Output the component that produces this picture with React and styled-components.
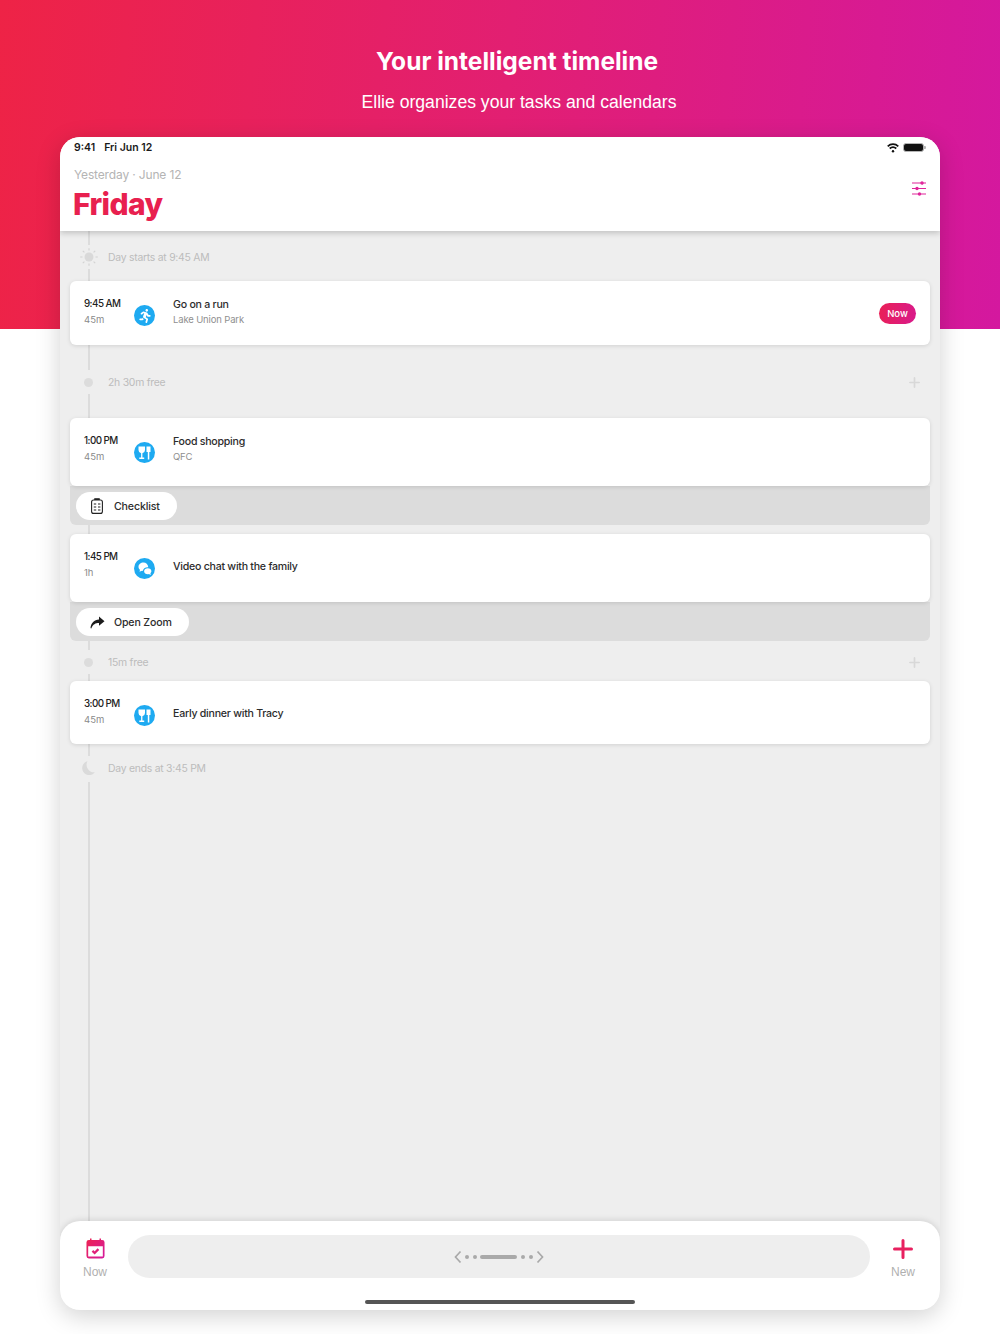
import React from "react";
import styled, { createGlobalStyle } from "styled-components";
import { FaRunning } from "react-icons/fa";

const GlobalStyle = createGlobalStyle`
  html, body {
    margin: 0;
    padding: 0;
    background: #fff;
    font-family: Inter, "Liberation Sans", sans-serif;
  }
  * {
    box-sizing: border-box;
  }
`;

function WifiIcon() {
  return (
    <svg width="12" height="10" viewBox="0 0 12 10" fill="none" stroke="#111" strokeWidth="1.7">
      <path d="M0.700 3.300c3-2.800 7.600-2.800 10.600 0" />
      <path d="M2.700 5.500c1.900-1.700 4.700-1.700 6.600 0" />
      <circle cx="6" cy="8.200" r="1.200" fill="#111" stroke="none" />
    </svg>
  );
}

function SlidersIcon() {
  return (
    <svg width="16" height="15" viewBox="0 0 16 15" fill="#e0249a" stroke="#e0249a" strokeWidth="1.200">
      <path d="M1 2h14M1 7.500h14M1 13h14" />
      <circle cx="11" cy="2" r="1.100" />
      <circle cx="6" cy="7.500" r="1.100" />
      <circle cx="8.500" cy="13" r="1.100" />
    </svg>
  );
}

function SunIcon() {
  return (
    <svg width="18" height="18" viewBox="0 0 18 18" stroke="#d2d2d2" strokeWidth="1.100">
      <circle cx="9" cy="9" r="4.500" fill="#d9d9d9" stroke="none" />
      <path d="M9 0.200v2.300M9 15.500v2.300M0.200 9h2.300M15.500 9h2.300M2.800 2.800l1.600 1.600M13.600 13.600l1.600 1.600M2.800 15.200l1.600-1.600M13.600 4.400l1.600-1.600" />
    </svg>
  );
}

function MoonIcon() {
  return (
    <svg width="13" height="14" viewBox="0 0 13 14">
      <path d="M5.500 0.300A7 7 0 1 0 12.800 11.300A7.500 7.500 0 0 1 5.500 0.300Z" fill="#dadada" />
    </svg>
  );
}

function FoodIcon() {
  return (
    <svg width="13" height="14" viewBox="0 0 13 14" fill="#fff">
      <path d="M0.500 0.500h6.500v3.500a3.250 3.250 0 0 1-2.600 3.200V11.500h1.800V13H1.300v-1.500h1.800V7.200A3.250 3.250 0 0 1 0.500 4Z" />
      <path d="M8.500 0.500h4v5.500h-1.200V13.500h-1.500V6H8.500Z" />
    </svg>
  );
}

function ChatIcon() {
  return (
    <svg width="14" height="13" viewBox="0 0 14 13" fill="#fff">
      <path d="M5.500 0.500C2.700 0.500 0.500 2.400 0.500 4.800c0 1.200.6 2.300 1.500 3L1.500 9.800l2.500-1c.3.100.6.100.900.200C5 6.800 7 5.200 9.700 5.200h.6C10 2.600 8 0.500 5.500 0.500Z" />
      <path d="M9.800 6.300c-2 0-3.700 1.300-3.700 3s1.700 3 3.700 3c.4 0 .8 0 1.100-.2l1.900.8-.4-1.600c.6-.5 1-1.200 1-2 0-1.700-1.600-3-3.600-3Z" />
    </svg>
  );
}

function ChecklistIcon() {
  return (
    <svg width="12" height="16" viewBox="0 0 12 16" fill="none" stroke="#222" strokeWidth="1.100">
      <rect x="0.600" y="2" width="10.800" height="13.400" rx="2" />
      <path d="M3.800 2V0.800h4.400V2" fill="#222" />
      <path d="M2.800 6h2.400M7 6h2.400M2.800 9h2.400M7 9h2.400M2.800 12h2.400M7 12h2.400" />
    </svg>
  );
}

function ShareIcon() {
  return (
    <svg width="15" height="13" viewBox="0 0 15 13" fill="#1c1c1c">
      <path d="M9 0.500L14.500 5.200 9 9.700V7C5.500 7 3 8.200 1.300 12.500 0.800 12.500 0.500 12.200 0.500 11.800 1 7 4.200 3.700 9 3.400Z" />
    </svg>
  );
}

function CalendarIcon() {
  return (
    <svg width="19" height="21" viewBox="0 0 20 22">
      <defs>
        <linearGradient id="calGrad" x1="0" y1="0" x2="1" y2="1">
          <stop offset="0" stopColor="#ee2350" />
          <stop offset="1" stopColor="#d4199e" />
        </linearGradient>
      </defs>
      <path
        d="M3 2h1.200V0.500h1.600V2h8.400V0.500h1.600V2H17a2.500 2.500 0 0 1 2.500 2.500V19A2.500 2.500 0 0 1 17 21.500H3A2.500 2.500 0 0 1 0.500 19V4.500A2.500 2.500 0 0 1 3 2ZM2.300 8.500V19.500h15.400V8.500Z"
        fill="url(#calGrad)"
        fillRule="evenodd"
      />
      <path d="M6.800 13.500l2.300 2.200 4-4" fill="none" stroke="#e01f78" strokeWidth="2.400" />
    </svg>
  );
}

function PlusIcon({ size, color, weight }) {
  return (
    <svg width={size} height={size} viewBox="0 0 20 20" stroke={color} strokeWidth={weight} strokeLinecap="round">
      <path d="M10 1.500v17M1.500 10h17" />
    </svg>
  );
}

function SwipeHandle() {
  return (
    <svg width="90" height="14" viewBox="0 0 90 14" fill="#a9a9a9">
      <path d="M6.500 1.500L1.500 7l5 5.500M83.500 1.500L88.500 7l-5 5.500" fill="none" stroke="#a9a9a9" strokeWidth="1.700" />
      <circle cx="13" cy="7" r="2" />
      <circle cx="21" cy="7" r="2" />
      <rect x="26" y="5" width="37" height="4" rx="2" />
      <circle cx="69" cy="7" r="2" />
      <circle cx="77" cy="7" r="2" />
    </svg>
  );
}

function EventCard({ time, duration, title, place, icon, now, height }) {
  return (
    <Card $height={height}>
      <TimeColumn>
        <TimeText>{time}</TimeText>
        <Duration>{duration}</Duration>
      </TimeColumn>
      <IconBadge>{icon}</IconBadge>
      <Details $single={!place}>
        <Title>{title}</Title>
        {place && <Place>{place}</Place>}
      </Details>
      {now && <NowBadge>Now</NowBadge>}
    </Card>
  );
}

function FreeSlot({ label }) {
  return (
    <MarkerRow>
      <MarkerSlot $inset={24}>
        <Dot />
      </MarkerSlot>
      <MarkerText>{label}</MarkerText>
      <AddSlot>
        <PlusIcon size={11} color="#d8d8d8" weight={3} />
      </AddSlot>
    </MarkerRow>
  );
}

function TrayAction({ icon, label }) {
  return (
    <Tray>
      <TrayButton>
        <TrayIcon>{icon}</TrayIcon>
        {label}
      </TrayButton>
    </Tray>
  );
}

function App() {
  return (
    <Page>
      <GlobalStyle />
      <Heading>Your intelligent timeline</Heading>
      <Subheading>Ellie organizes your tasks and calendars</Subheading>
      <Device>
        <Header>
          <StatusBar>
            <StatusLeft>
              <span>9:41</span>
              <span>Fri Jun 12</span>
            </StatusLeft>
            <StatusRight>
              <WifiIcon />
              <Battery />
            </StatusRight>
          </StatusBar>
          <HeaderBody>
            <div>
              <DateLine>Yesterday · June 12</DateLine>
              <DayTitle>Friday</DayTitle>
            </div>
            <FilterButton>
              <SlidersIcon />
            </FilterButton>
          </HeaderBody>
        </Header>
        <Timeline>
          <Connector $height={14} />
          <MarkerRow>
            <MarkerSlot $inset={20}>
              <SunIcon />
            </MarkerSlot>
            <MarkerText>Day starts at 9:45 AM</MarkerText>
          </MarkerRow>
          <Connector $height={12} />
          <EventCard
            time="9:45 AM"
            duration="45m"
            title="Go on a run"
            place="Lake Union Park"
            icon={<FaRunning size={14} color="#fff" />}
            height={64}
            now
          />
          <Connector $height={25} />
          <FreeSlot label="2h 30m free" />
          <Connector $height={24} />
          <CardGroup>
            <EventCard
              time="1:00 PM"
              duration="45m"
              title="Food shopping"
              place="QFC"
              icon={<FoodIcon />}
              height={68}
            />
            <TrayAction icon={<ChecklistIcon />} label="Checklist" />
          </CardGroup>
          <Connector $height={9} />
          <CardGroup>
            <EventCard
              time="1:45 PM"
              duration="1h"
              title="Video chat with the family"
              icon={<ChatIcon />}
              height={68}
            />
            <TrayAction icon={<ShareIcon />} label="Open Zoom" />
          </CardGroup>
          <Connector $height={9} />
          <FreeSlot label="15m free" />
          <Connector $height={7} />
          <EventCard
            time="3:00 PM"
            duration="45m"
            title="Early dinner with Tracy"
            icon={<FoodIcon />}
            height={63}
          />
          <Connector $height={12} />
          <MarkerRow>
            <MarkerSlot $inset={22}>
              <MoonIcon />
            </MarkerSlot>
            <MarkerText>Day ends at 3:45 PM</MarkerText>
          </MarkerRow>
          <Connector $grow />
        </Timeline>
        <BottomBar>
          <NavRow>
            <NavItem $inset={2}>
              <NavIcon>
                <CalendarIcon />
              </NavIcon>
              <NavLabel>Now</NavLabel>
            </NavItem>
            <SearchPill>
              <SwipeHandle />
            </SearchPill>
            <NavItem>
              <NavIcon>
                <PlusIcon size={20} color="#e8205f" weight={3} />
              </NavIcon>
              <NavLabel>New</NavLabel>
            </NavItem>
          </NavRow>
          <HomeIndicator />
        </BottomBar>
      </Device>
    </Page>
  );
}

export default App;

const Page = styled.div`
  width: 1000px;
  height: 1334px;
  overflow: hidden;
  padding-top: 46px;
  background: linear-gradient(95deg, #ee2346 0%, #e21f72 50%, #d4189f 100%) no-repeat;
  background-size: 100% 329px;
  display: flex;
  flex-direction: column;
  align-items: center;
`;

const Heading = styled.h1`
  margin: 0 0 0 34px;
  width: 966px;
  text-align: center;
  font-family: Inter, sans-serif;
  font-size: 24.500px;
  line-height: 30px;
  font-weight: 700;
  color: #fff;
`;

const Subheading = styled.p`
  margin: 15px 0 0 38px;
  width: 962px;
  text-align: center;
  font-family: "Liberation Sans", Arial, sans-serif;
  font-size: 17.600px;
  line-height: 22px;
  color: #fff;
`;

const Device = styled.div`
  width: 880px;
  height: 1173px;
  margin-top: 24px;
  border-radius: 20px;
  overflow: hidden;
  background: #eeeeee;
  box-shadow: 0 6px 24px rgba(0, 0, 0, 0.18);
  display: flex;
  flex-direction: column;
`;

const Header = styled.header`
  height: 94px;
  flex: none;
  background: #fff;
  box-shadow: 0 2px 6px rgba(0, 0, 0, 0.2);
  position: relative;
  z-index: 1;
`;

const StatusBar = styled.div`
  height: 20px;
  padding: 1px 16px 0 14px;
  display: flex;
  align-items: center;
  justify-content: space-between;
`;

const StatusLeft = styled.div`
  display: flex;
  gap: 9px;
  font-size: 10.500px;
  font-weight: 600;
  color: #1a1a1a;
`;

const StatusRight = styled.div`
  display: flex;
  align-items: center;
  gap: 4px;
`;

const Battery = styled.div`
  width: 21px;
  height: 9px;
  border-radius: 3px;
  background: #111;
  border: 1px solid #b5b5b5;
  position: relative;

  &::after {
    content: "";
    position: absolute;
    right: -3px;
    top: 2px;
    width: 2px;
    height: 3px;
    border-radius: 0 1px 1px 0;
    background: #b5b5b5;
  }
`;

const HeaderBody = styled.div`
  padding: 10px 13px 0 13px;
  display: flex;
  align-items: flex-start;
  justify-content: space-between;
`;

const FilterButton = styled.div`
  margin-top: 14px;
  display: flex;
`;

const DateLine = styled.div`
  padding-left: 1px;
  font-size: 12px;
  line-height: 16px;
  letter-spacing: -0.15px;
  color: #b4b4b4;
`;

const DayTitle = styled.div`
  margin-top: 3px;
  font-size: 30px;
  line-height: 36px;
  font-weight: 800;
  letter-spacing: -0.6px;
  color: #e8204f;
`;

const Timeline = styled.main`
  flex: 1;
  min-height: 0;
  display: flex;
  flex-direction: column;
`;

const Connector = styled.div`
  width: 2px;
  margin-left: 28px;
  margin-top: ${(p) => (p.$grow ? "2px" : "0")};
  flex: ${(p) => (p.$grow ? "1" : "none")};
  height: ${(p) => (p.$height ? `${p.$height}px` : "auto")};
  background: #dcdcdc;
`;

const MarkerRow = styled.div`
  height: 24px;
  flex: none;
  display: flex;
  align-items: center;
  padding-right: 20px;
`;

const MarkerSlot = styled.div`
  width: 48px;
  padding-left: ${(p) => p.$inset}px;
  display: flex;
  align-items: center;
`;

const MarkerText = styled.span`
  font-size: 10.400px;
  letter-spacing: -0.25px;
  color: #bcbcbc;
`;

const AddSlot = styled.div`
  margin-left: auto;
  display: flex;
`;

const Dot = styled.div`
  width: 9px;
  height: 9px;
  border-radius: 50%;
  background: #dcdcdc;
`;

const CardGroup = styled.div`
  flex: none;
`;

const Card = styled.div`
  height: ${(p) => p.$height}px;
  margin: 0 10px;
  padding: 16px 14px 0;
  background: #fff;
  border-radius: 6px;
  box-shadow: 0 1px 4px rgba(0, 0, 0, 0.12);
  display: flex;
  align-items: flex-start;
  position: relative;
`;

const TimeColumn = styled.div`
  width: 50px;
`;

const TimeText = styled.div`
  font-size: 9.800px;
  line-height: 14px;
  font-weight: 500;
  letter-spacing: -0.55px;
  color: #222;
`;

const Duration = styled.div`
  margin-top: 2px;
  font-size: 9.500px;
  line-height: 14px;
  color: #8a8a8a;
`;

const IconBadge = styled.div`
  width: 21px;
  height: 21px;
  margin-top: 8px;
  border-radius: 50%;
  background: #1eaaf1;
  display: flex;
  align-items: center;
  justify-content: center;
  flex: none;
`;

const Details = styled.div`
  margin-left: 18px;
  padding-top: ${(p) => (p.$single ? "9px" : "0")};
  flex: 1;
`;

const Title = styled.div`
  font-size: 10.600px;
  line-height: 15px;
  font-weight: 500;
  letter-spacing: -0.25px;
  color: #2c2c2c;
`;

const Place = styled.div`
  margin-top: 1px;
  font-size: 9.500px;
  line-height: 14px;
  letter-spacing: -0.15px;
  color: #8f8f8f;
`;

const NowBadge = styled.div`
  width: 37px;
  height: 21px;
  margin-top: 6px;
  border-radius: 11px;
  background: linear-gradient(100deg, #ea2055, #d81a8c);
  color: #fff;
  font-size: 9.500px;
  font-weight: 500;
  display: flex;
  align-items: center;
  justify-content: center;
`;

const Tray = styled.div`
  height: 39px;
  margin: 0 10px;
  padding: 6px 0 0 6px;
  border-radius: 0 0 6px 6px;
  background: #dcdcdc;
`;

const TrayButton = styled.div`
  display: inline-flex;
  align-items: center;
  gap: 5px;
  height: 28px;
  padding: 0 17px 0 9px;
  border-radius: 14px;
  background: #fff;
  font-size: 10.600px;
  font-weight: 500;
  letter-spacing: -0.15px;
  color: #2c2c2c;
`;

const TrayIcon = styled.span`
  width: 24px;
  display: flex;
  justify-content: center;
`;

const BottomBar = styled.footer`
  height: 89px;
  flex: none;
  background: #fff;
  border-radius: 20px 20px 0 0;
  box-shadow: 0 -1px 6px rgba(0, 0, 0, 0.12);
  position: relative;
`;

const NavRow = styled.div`
  display: grid;
  grid-template-columns: 68px 1fr 66px;
  padding: 14px 4px 0 0;
`;

const NavItem = styled.div`
  display: flex;
  flex-direction: column;
  align-items: center;
  gap: 6px;
  padding-top: 3px;
  padding-left: ${(p) => p.$inset || 0}px;
`;

const NavIcon = styled.div`
  height: 21px;
  display: flex;
  align-items: center;
`;

const NavLabel = styled.span`
  font-family: "Liberation Sans", Arial, sans-serif;
  font-size: 12px;
  line-height: 14px;
  color: #b0b0b0;
`;

const SearchPill = styled.div`
  height: 43px;
  border-radius: 22px;
  background: #eeeeee;
  display: flex;
  align-items: center;
  justify-content: center;
`;

const HomeIndicator = styled.div`
  width: 270px;
  height: 4px;
  margin: 21px auto 0;
  border-radius: 2px;
  background: #555;
`;
